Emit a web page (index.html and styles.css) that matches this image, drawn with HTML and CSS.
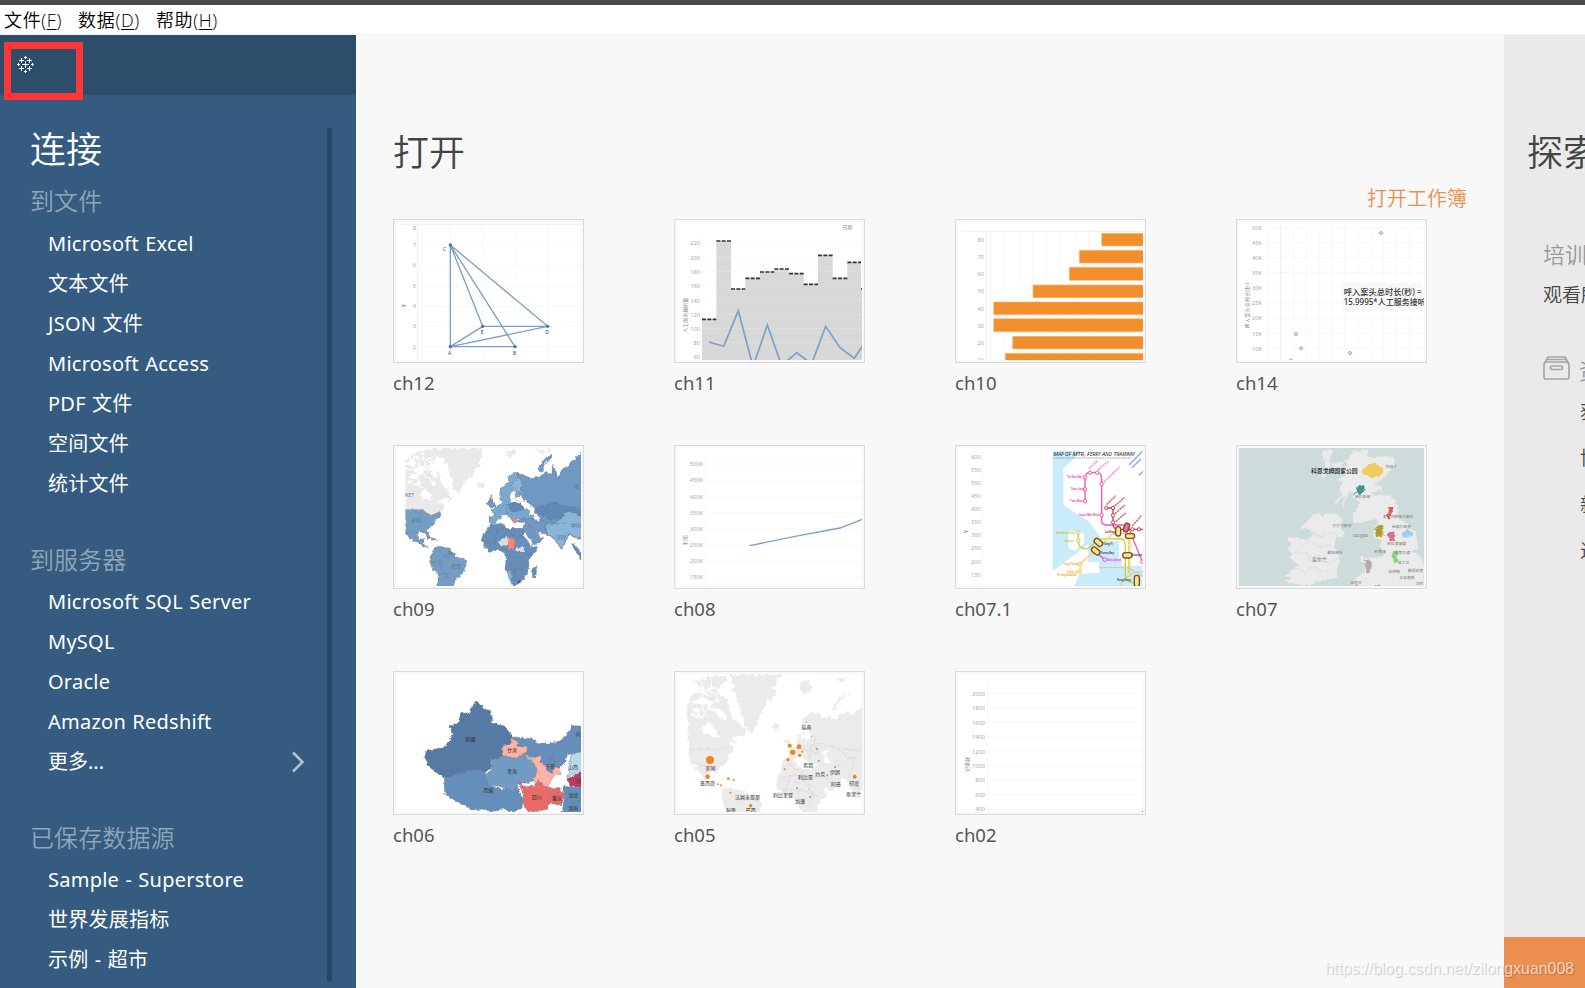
FILE: index.html
```html
<!DOCTYPE html>
<html lang="zh-CN">
<head>
<meta charset="utf-8">
<title>Tableau</title>
<link rel="stylesheet" href="styles.css">
</head>
<body>
<nav class="menubar"><span>文件(<u>F</u>)</span><span>数据(<u>D</u>)</span><span>帮助(<u>H</u>)</span></nav>
<div class="app">
<aside class="sidebar">
  <div class="brand">
    <svg class="logo" viewBox="0 0 18 18"><path d="M8.500 5v7M5 8.500h7M4.500 2v5M2 4.500h5M12.500 2v5M10 4.500h5M4.500 10v5M2 12.500h5M12.500 10v5M10 12.500h5M8.500 0v3M7 1.500h3M8.500 14v3M7 15.500h3M1.500 7v3M0 8.500h3M15.500 7v3M14 8.500h3"/></svg>
    <div class="marker"></div>
  </div>
  <div class="connect">
    <h1>连接</h1>
    <h2>到文件</h2>
    <ul><li>Microsoft Excel</li><li>文本文件</li><li>JSON 文件</li><li>Microsoft Access</li><li>PDF 文件</li><li>空间文件</li><li>统计文件</li></ul>
    <h2 class="later">到服务器</h2>
    <ul><li>Microsoft SQL Server</li><li>MySQL</li><li>Oracle</li><li>Amazon Redshift</li><li class="more">更多...<svg viewBox="0 0 14 22"><path d="M2 1.500 11.500 11 2 20.500"/></svg></li></ul>
    <h2 class="later">已保存数据源</h2>
    <ul><li>Sample - Superstore</li><li>世界发展指标</li><li>示例 - 超市</li></ul>
    <div class="scroll"></div>
  </div>
</aside>
<main class="open">
  <h1>打开</h1>
  <a class="open-link">打开工作簿</a>
  <div class="grid">
    <figure><div class="thumb"><svg viewBox="33 36 555 414">
      <path class="rule" d="M40 43H588M98 43V450"/><path class="rule faint" d="M98 105H588M98 166H588M98 228H588M98 289H588M98 349H588M98 410H588M196 43V450M293 43V450M390 43V450M488 43V450"/>
      <g class="tick"><text x="93" y="61">8</text><text x="93" y="111">7</text><text x="93" y="172">6</text><text x="93" y="234">5</text><text x="93" y="295">4</text><text x="93" y="355">3</text><text x="93" y="416">2</text></g>
      <text class="tiny dark" transform="translate(63 292) rotate(-90)">Y</text>
      <path class="blue" d="M196 105V410H390L196 105 488 349H293L196 105M196 410 293 349M196 410 488 349"/>
      <g fill="#4674a9"><circle cx="196" cy="105" r="5"/><circle cx="196" cy="410" r="5"/><circle cx="390" cy="410" r="5"/><circle cx="293" cy="349" r="5"/><circle cx="488" cy="349" r="5"/></g>
      <g class="tiny dark"><text x="173" y="122">C</text><text x="189" y="434">A</text><text x="384" y="434">B</text><text x="287" y="372">E</text><text x="481" y="372">D</text></g>
    </svg></div><figcaption>ch12</figcaption></figure>

    <figure><div class="thumb"><svg viewBox="36 36 555 414">
      <path fill="#d8d8d8" d="M111 450V328H154V93H198V237H241V205H285V186H328V177H372V191H416V223H459V136H503V205H547V157H588V237H591V450Z"/>
      <path class="rule" d="M110 62V450M110 98H591M110 142H591M110 185H591M110 228H591M110 271H591M110 313H591M110 355H591M110 398H591" opacity=".35"/>
      <path fill="none" stroke="#333" stroke-width="5" stroke-dasharray="12 4" d="M111 328H154M154 93H198M198 237H241M241 205H285M285 186H328M328 177H372M372 191H416M416 223H459M459 136H503M503 205H547M547 157H588M588 237H594"/>
      <path class="blue thick" d="M132 396 176 409 220 302 264 470 307 345 350 467 395 428 440 462 482 349 525 413 568 445 593 406"/>
      <g class="tick"><text x="105" y="105">220</text><text x="105" y="149">200</text><text x="105" y="192">180</text><text x="105" y="235">160</text><text x="105" y="278">140</text><text x="105" y="320">120</text><text x="105" y="362">100</text><text x="105" y="405">80</text><text x="105" y="447">60</text></g>
      <text class="tiny" x="532" y="58">日期</text><text class="tiny" transform="translate(67 368) rotate(-90)">人工服务接听量</text>
    </svg></div><figcaption>ch11</figcaption></figure>

    <figure><div class="thumb"><svg viewBox="39 36 555 414">
      <path class="rule" d="M48 64H594M124 64V450"/><path class="rule faint" d="M136 64V450M179 64V450M221 64V450M263 64V450M305 64V450M347 64V450M389 64V450M431 64V450"/>
      <path fill="#f28e2b" stroke="#f9b877" stroke-width="2" d="M470 70H596V108H470ZM403 121H596V159H403ZM373 172H596V211H373ZM264 225H596V263H264ZM146 276H596V314H146ZM146 326H596V365H146ZM203 379H596V417H203ZM181 430H596V460H181Z"/>
      <g class="tick"><text x="117" y="96">80</text><text x="117" y="148">70</text><text x="117" y="199">60</text><text x="117" y="250">50</text><text x="117" y="303">40</text><text x="117" y="353">30</text><text x="117" y="405">20</text><text x="117" y="456">10</text></g>
    </svg></div><figcaption>ch10</figcaption></figure>

    <figure><div class="thumb"><svg viewBox="42 141 555 414">
      <path class="rule faint" d="M116 157H597M116 203H597M116 248H597M116 293H597M116 339H597M116 384H597M116 429H597M116 475H597M116 521H597M127 150V555M206 150V555M244 150V555M284 150V555M322 150V555M360 150V555M399 150V555M438 150V555M476 150V555M515 150V555M553 150V555"/><path class="rule" d="M167 150V555"/>
      <g class="tick"><text x="111" y="166">50K</text><text x="111" y="209">45K</text><text x="111" y="254">40K</text><text x="111" y="300">35K</text><text x="111" y="345">30K</text><text x="111" y="391">25K</text><text x="111" y="436">20K</text><text x="111" y="482">15K</text><text x="111" y="527">10K</text></g>
      <g fill="#dfe9f3" stroke="#8fafd0" stroke-width="3"><circle cx="468" cy="174" r="4.500"/><circle cx="213" cy="477" r="4.500"/><circle cx="228" cy="520" r="4.500"/><circle cx="375" cy="534" r="4.500"/><circle cx="197" cy="556" r="4.500"/></g>
      <path fill="#f8f8f8" d="M349 322H592V408H349Z"/>
      <text class="note" x="356" y="359" textLength="234" lengthAdjust="spacingAndGlyphs">呼入案头总时长(秒) =</text><text class="note" x="356" y="391" textLength="246" lengthAdjust="spacingAndGlyphs">15.9995*人工服务接听</text>
      <text class="tiny" transform="translate(73 460) rotate(-90)" textLength="136">呼入案头总时长(秒)</text>
    </svg></div><figcaption>ch14</figcaption></figure>

    <figure><div class="thumb"><svg viewBox="33 39 555 414">
      <defs><filter id="coast" x="-5%" y="-5%" width="110%" height="110%" color-interpolation-filters="sRGB"><feTurbulence type="fractalNoise" baseFrequency=".07" numOctaves="3" seed="4"/><feDisplacementMap in="SourceGraphic" scale="22" xChannelSelector="R" yChannelSelector="G"/></filter><filter id="border" x="-5%" y="-5%" width="110%" height="110%" color-interpolation-filters="sRGB"><feTurbulence type="fractalNoise" baseFrequency=".09" numOctaves="2" seed="9"/><feDisplacementMap in="SourceGraphic" scale="13" xChannelSelector="R" yChannelSelector="G"/></filter></defs>
      <g filter="url(#coast)">
        <path fill="#e9e9e9" d="M61 75 78 60 98 50 145 40 170 45 150 70 140 95 165 115 168 145 185 160 200 190 175 215 165 238 135 238 120 232 61 224ZM172 40H290L285 85 270 105 258 125 235 150 222 178 208 160 198 130 190 90 175 70 150 60ZM273 147 290 142 300 150 287 160ZM361 52 372 45 386 42 392 55 376 68ZM448 40 475 48 500 44 490 55 465 56Z"/>
        <path fill="#fff" d="M61 83 80 70 95 100 75 92ZM82 105 110 87 130 105 105 115ZM104 174 120 162 140 175 138 200 116 191ZM130 70 150 100 160 130 143 120ZM65 125 90 116 100 125 78 133ZM155 200 188 190 190 225 170 205Z"/>
        <path class="strait" d="M61 62 86 74 120 68 148 82M88 50 102 84 96 128 112 160M112 50 118 82 142 110M64 104 96 108 128 128 148 150M68 142 86 150 104 146"/>
      </g>
      <g filter="url(#border)">
        <g class="nation"><path fill="#759dc3" d="M61 224H112L136 242 150 237 165 230 168 242 148 256 148 268 132 279 128 291 135 306 126 306 121 292 100 290 97 304 104 316 117 310 112 326 98 324 75 311 61 292Z"/>
        <path fill="#759dc3" d="M98 323 115 327 128 339 118 336ZM126 306 150 311 160 319 140 314ZM150 337 170 334 196 344 209 355 213 367 235 371 247 379 240 397 230 420 214 431 202 460H157L160 417 141 399 134 381 139 360Z"/>
        <path d="M316 267 336 267 352 265 363 281 390 280 414 280 424 308 439 336 459 335 452 350 430 374 433 399 421 420 411 440 389 452 378 444 375 423 360 400 364 366 356 350 336 345 315 350 295 331 291 311Z"/>
        <path d="M441 402 456 392 453 421 443 428Z"/>
        <path fill="#7ba8cf" d="M311 246 329 245 320 224 335 217 350 202 344 184 346 163 368 145 373 124 391 112 412 116 432 132 428 149 412 151 410 180 392 188 389 164 378 169 373 191 377 205 360 214 380 218 410 218 435 228 430 242 445 240 448 256 425 256 395 252 387 265 374 246 354 238 340 254 333 265 316 265Z"/>
        <path fill="#7098c2" d="M306 207 319 182 326 204 336 216 317 215ZM460 105 473 78 499 58 500 68 477 88 470 112ZM395 115 413 120 430 131 461 127 486 112 501 118 502 90 513 110 519 130 530 105 564 78 598 45V314L570 310 555 299 545 315 529 345 515 322 504 309 483 297 462 293 450 285 463 303 476 309 466 320 440 331 423 303 414 286 421 263 390 260 412 250 444 247 465 264 463 245 450 235 449 218 437 209 410 187 413 173Z"/>
        <path fill="#6189b5" d="M449 218 475 214 494 201 517 202 527 211 550 216 598 222V242L548 227 529 248 495 254 481 244 462 237ZM365 207 387 201 410 207 415 225 382 231ZM190 345 208 356 191 357Z"/>
        <path fill="#8ab4d8" d="M548 227 598 246V314L566 304 553 296 530 344 502 306 482 292 486 268 513 264 530 249ZM378 153 402 124 412 151 406 176 387 166ZM366 407 380 404 381 425 371 428Z"/>
        <path d="M558 326 570 329 588 352V376Z"/>
        <path fill="none" d="M316 267 336 285 355 278 357 264M355 278 387 304M387 280V304M414 280 421 303 389 305M336 285 328 325M291 317 328 325 344 332 356 343 368 342M387 304V340M365 365 408 367 440 355M408 367 411 388 433 388M381 404H411V422M364 382 390 391 389 425M156 340 176 360 209 359M138 381 164 378 169 405 194 419M164 378 182 365 195 372M157 417 180 415 202 441M61 292 76 294 98 292M336 217 350 230M366 208 366 235 387 239M382 190 410 202M413 250 434 272 447 283M444 247 478 260 483 294M477 238 510 266 545 264"/></g>
        <path fill="#fff" d="M384 262 412 266 416 278 392 277ZM414 292 420 290 440 322 438 330 424 312Z"/>
        <path fill="#d9dde1" d="M340 319 366 303 370 330 343 331ZM394 337 416 337 417 351 394 350Z"/><path fill="#ff8271" d="M368 306 390 312 387 339 370 344ZM382 249 396 253 391 267Z"/><path fill="#b02a58" d="M398 436h7v7h-7Z"/>
      </g><path fill="#fff" d="M33 39H61V453H33Z"/><g class="maptext soft"><text x="60" y="187">KET</text><text x="78" y="261">美国</text><text x="199" y="398">巴西</text><text x="567" y="158">俄</text><text x="558" y="277">中国</text><text x="515" y="311">印度</text></g>
    </svg></div><figcaption>ch09</figcaption></figure>

    <figure><div class="thumb"><svg viewBox="36 39 555 414">
      <path class="rule faint" d="M122 62V453M122 87H591M122 136H591M122 184H591M122 233H591M122 282H591M122 330H591M122 378H591M122 427H591"/>
      <g class="tick"><text x="114" y="94">500K</text><text x="114" y="142">450K</text><text x="114" y="191">400K</text><text x="114" y="240">350K</text><text x="114" y="288">300K</text><text x="114" y="337">250K</text><text x="114" y="385">200K</text><text x="114" y="433">150K</text></g>
      <path class="blue" d="M254 332 390 304 525 279 593 253"/><text class="tiny" transform="translate(67 331) rotate(-90)">利润</text>
    </svg></div><figcaption>ch08</figcaption></figure>

    <figure><div class="thumb"><svg viewBox="879 39 555 414">
      <path class="rule faint" d="M952 45V453"/><path fill="#c9ebfc" d="M1163 47H1249L1195 102V210L1272 260 1315 318 1362 319V370L1432 394V453H1228L1243 417 1303 413V381H1270V328L1163 408Z"/>
      <path fill="#fff" d="M1210 287 1255 293 1258 325 1228 347 1210 338ZM1370 310H1434V392H1370Z"/>
      <g class="tick"><text x="947" y="72">600</text><text x="947" y="111">550</text><text x="947" y="150">500</text><text x="947" y="189">450</text><text x="947" y="228">400</text><text x="947" y="268">350</text><text x="947" y="307">300</text><text x="947" y="346">250</text><text x="947" y="386">200</text><text x="947" y="425">150</text><text x="947" y="464">100</text></g><text class="tiny dark" transform="translate(908 294) rotate(-90)">Y</text>
      <g class="rail"><path stroke="#ff4faa" d="M1260 198V127Q1262 113 1275 113H1298Q1310 115 1310 132V258Q1310 270 1324 270H1375Q1393 272 1400 302L1432 380"/><path stroke="#dc3d4a" d="M1324 219H1344V270Q1346 283 1360 283H1434"/><path stroke="#c6d330" d="M1240 293V318Q1240 342 1264 342 1282 335 1293 315 1300 311 1370 311 1381 315 1381 335V420Q1384 444 1415 445M1392 311V414"/><path stroke="#ffd064" d="M1245 410V387L1290 347 1341 298Q1358 294 1382 296 1394 300 1394 320V426"/><path stroke="#e7ba91" stroke-dasharray="5 2" d="M1303 398H1390L1434 424M1364 453Q1396 405 1434 411"/><path stroke="#f03bee" d="M1292 350 1319 374"/></g>
      <g class="stops"><g stroke="#ff4faa"><circle cx="1260" cy="127" r="5"/><circle cx="1260" cy="163" r="5"/><circle cx="1260" cy="198" r="5"/><circle cx="1275" cy="113" r="5"/><circle cx="1296" cy="113" r="5"/><circle cx="1310" cy="147" r="5"/><circle cx="1310" cy="240" r="5"/><circle cx="1432" cy="380" r="5"/></g><g stroke="#c93b4b"><circle cx="1324" cy="219" r="5"/><circle cx="1344" cy="219" r="5"/><circle cx="1344" cy="241" r="5"/><circle cx="1344" cy="262" r="5"/><circle cx="1402" cy="283" r="5"/><circle cx="1422" cy="283" r="5"/></g><g stroke="#cad52c"><circle cx="1240" cy="293" r="5"/><circle cx="1240" cy="318" r="5"/></g><g stroke="#ffc34a"><circle cx="1245" cy="387" r="5"/><circle cx="1245" cy="410" r="5"/><circle cx="1394" cy="331" r="5"/></g><circle stroke="#f03bee" cx="1319" cy="374" r="5"/></g>
      <g fill="#ffe28a" stroke="#75501f" stroke-width="4"><rect x="1286" y="314" width="28" height="16" rx="8" transform="rotate(40 1300 322)"/><rect x="1278" y="340" width="28" height="16" rx="8" transform="rotate(40 1292 348)"/><rect x="1352" y="275" width="15" height="28" rx="7"/><rect x="1377" y="264" width="15" height="27" rx="7" fill="#f26a9d" transform="rotate(20 1384 277)"/><rect x="1381" y="296" width="28" height="14" rx="7"/><rect x="1373" y="353" width="28" height="16" rx="8"/><rect x="1408" y="421" width="15" height="34" rx="7"/></g>
      <path fill="none" stroke="#ff9ac7" stroke-width="5" stroke-dasharray="7 2" d="M1272 101 1299 76M1299 105 1330 79M1316 142 1364 96"/><path fill="none" stroke="#cf7679" stroke-width="5" stroke-dasharray="7 2" d="M1325 209 1352 182M1349 213 1379 187M1350 236 1380 210M1352 260 1382 234M1402 273 1429 242"/><path fill="none" stroke="#93b3f4" stroke-width="5" d="M1392 90 1432 49M1401 98 1428 72M1421 121 1435 109"/>
      <text class="metro" x="1165" y="63" textLength="245" lengthAdjust="spacingAndGlyphs">M<tspan class="sc">AP OF</tspan> MTR, F<tspan class="sc">ERRY</tspan> A<tspan class="sc">ND</tspan> T<tspan class="sc">RAMWAY</tspan></text><path stroke="#777" stroke-width="2" stroke-dasharray="5 2" d="M1165 69H1398"/>
      <g class="station"><text x="1206" y="130">Tin Shui Wai</text><text x="1218" y="165">Yuen Long</text><text x="1216" y="201">Tuen Mun</text><text x="1242" y="243">Tsuen Wan West</text><g fill="#c3cd2e"><text x="1174" y="296">AsiaWorld-Expo</text><text x="1200" y="320">Airport</text></g><g fill="#efae24"><text x="1195" y="389">Tung Chung</text><text x="1206" y="413">Cable Car</text><text x="1176" y="424">(Po Big Buddha)</text></g><g fill="#554234"><text x="1315" y="331">Tsing Yi</text><text x="1308" y="357">Sunny Bay</text><text x="1320" y="293">Lai King</text><text x="1400" y="363">Kowloon</text><text x="1356" y="438">Hong Kong</text></g><text x="1326" y="377" fill="#ed36e6">Disneyland</text></g>
    </svg></div><figcaption>ch07.1</figcaption></figure>

    <figure><div class="thumb"><svg viewBox="42 39 555 414"><path fill="#cddbda" d="M42 39H597V453H42Z"/>
      <g filter="url(#border)"><path class="land" d="M384 48 433 44 424 60 440 68 482 62 510 67 507 87 483 122 464 139 448 151 476 153 471 166 448 171 438 180 470 180 490 181 510 195 520 220 518 251 548 266 572 294 580 342 570 345 555 348 582 361 597 387V460H391L382 441 404 420 418 412 424 387 400 374 408 359 425 369 470 365 474 353 464 335 469 316 445 305 446 277 461 265 453 251 432 259 400 265 386 259 382 246 390 225 406 202 386 187 384 169 371 174 359 201 355 226 351 200 361 179 330 209 332 195 349 178 342 165 353 141 337 133 362 119 350 102 369 88 358 78 378 60Z"/>
      <path class="land" d="M239 265 260 244 276 233 292 243 307 233 333 236 348 249 355 273 348 283 362 293 351 306 333 310 327 335 337 348 345 376 338 407 334 428 313 433 282 438 256 450 236 453 209 447 178 439 199 430 181 421 203 402 222 388 210 381 189 368 204 357 187 342 198 329 188 316 193 303 220 311 244 314 260 300 262 289 247 283 221 282Z"/><path class="land" d="M393 310 407 295 403 310ZM290 50 314 42 325 49 310 76 294 74ZM300 79 317 72 313 105 299 103ZM320 88 352 77 355 95 330 101ZM354 110 374 108 371 118ZM290 114 308 124 294 132Z"/>
      <path fill="none" stroke="#d6d6d6" stroke-width="2" d="M262 289 290 310 305 290 330 310M244 318 270 288 283 305 309 310 324 291 343 304M225 329 260 318 280 336 320 329M208 351 246 354 258 383 285 360 310 388 337 370M217 395 242 415 263 391 286 409 308 404 320 425"/>
      <path fill="#efcc63" d="M409 111 414 99 427 97 430 87 446 83 470 97 472 114 457 127 435 128Z"/><path fill="#419590" d="M384 181 396 164 399 150 417 151 419 164 405 181 396 174Z"/><path fill="#e15759" d="M495 213 505 216 505 229 496 236 492 253 484 252 490 235Z"/><path fill="#b39b30" d="M448 280 463 269 475 279 476 302 454 306Z"/><path fill="#d37295" d="M484 295 509 289 507 306 510 319 495 316Z"/><path fill="#9fcbed" d="M531 304 537 286 552 285 565 297 556 305Z"/><path fill="#8cd17d" d="M504 347 516 352 520 378 510 383 501 370Z"/><path fill="#b9aaa6" d="M419 374 430 370 441 388 435 413 424 412Z"/><path fill="#f39a9d" d="M385 451 396 446 400 460H385Z"/><path fill="#f28e2b" d="M434 453 464 449V460H434Z"/></g>
      <g class="maptext small"><text class="strong" x="258" y="115" textLength="140">科恩戈姆国家公园</text><text x="482" y="98">阿伯丁</text><text x="390" y="189">格拉斯哥</text><text x="474" y="250">泰恩河畔纽卡斯尔</text><text x="322" y="276">贝尔法斯特</text><text x="385" y="307">Douglas</text><text x="500" y="279">米德尔斯堡</text><text x="486" y="329">布拉德福德</text><text x="307" y="358">都柏林市</text><text class="country" x="261" y="379">爱尔兰</text><text x="448" y="355">利物浦</text><text x="509" y="356">谢菲尔德</text><text x="518" y="386">诺丁汉</text><text x="490" y="415">伯明翰</text><text x="548" y="411">彼得伯勒</text><text x="523" y="431">北安普敦</text><text x="376" y="446">加的夫</text><text x="572" y="449">剑桥</text></g>
    </svg></div><figcaption>ch07</figcaption></figure>

    <figure><div class="thumb"><svg viewBox="33 42 555 414"><g class="nation" filter="url(#border)">
      <path d="M384 231 440 237 463 250 503 249 532 238 557 210 560 197 598 199V271L550 285 535 311 523 325 500 318 490 339 460 306 431 289 397 281Z"/><path fill="#557aa3" d="M118 286 127 271 170 264 193 246 202 226 195 198 218 191 228 160 257 158 261 138 277 125 292 138 292 148 315 151 323 174 318 188 359 199 383 229 376 254 356 268 353 292 316 300 320 321 302 336 275 329 210 343 181 356 153 339 131 316Z"/>
      <path d="M178 356 210 343 275 329 303 334 308 371 350 389 397 379 414 421 411 445 385 456 350 444 325 456 291 447 260 450 222 429 179 401Z"/><path fill="#719bc3" d="M313 300 350 289 418 287 458 318 450 361 399 375 384 393 339 379 305 370 308 339 321 323Z"/><path fill="#ffb2a5" d="M353 258 378 250 385 232 398 246 396 258 427 262 426 275 410 285 441 296 472 286 467 303 491 328 501 341 500 320 525 323 524 344 506 347 488 380 451 377 445 357 458 336 448 305 417 287 380 294 353 287Z"/><path fill="#e96b69" d="M399 366 413 367 414 380 448 379 460 361 479 380 520 384 539 403 528 437 493 428 488 447 460 454 430 455 415 434 414 399Z"/><path d="M535 379 598 385V466H530L538 413ZM480 329 488 325 498 288 511 312 502 340Z"/><path fill="#b8d9eb" d="M558 286 598 270V327L548 350Z"/><path fill="#b83c65" d="M547 356 598 331V384L555 377Z"/><path fill="none" d="M492 427 500 405 520 403 522 388 530 386M534 420 560 428 598 418"/></g>
      <g class="maptext black"><text x="241" y="242">新疆</text><text x="366" y="276">甘肃</text><text x="366" y="339">青海</text><text x="295" y="396">西藏</text><text x="440" y="417">四川</text><text x="501" y="420">重庆</text><text x="480" y="325">宁夏</text><text x="549" y="327">山西</text><text x="550" y="411">湖北</text><text x="550" y="450">湖南</text><text x="572" y="228">内</text><text x="572" y="369">河</text></g>
    </svg></div><figcaption>ch06</figcaption></figure>

    <figure><div class="thumb"><svg viewBox="36 42 555 414"><g filter="url(#coast)">
      <path class="land" d="M67 138 85 104 112 85 90 65 155 45 187 54 164 79 158 99 184 114 188 145 203 175 240 205 235 234 195 250 206 271 189 283 186 306 168 320 157 337 148 328 129 336 120 350 132 369 145 373 157 389 142 378 125 357 104 343 92 320 75 302ZM190 45H347L323 80 331 100 295 140 270 200 258 221 245 205 231 161 217 117 202 86 209 58ZM320 196 336 187 346 196 331 205ZM404 73 416 64 432 61 443 80 417 104ZM515 60 540 50 535 65ZM355 311 358 293 376 294 370 273 401 250 397 232 415 211 406 193 420 173 442 157 475 174 516 176 536 157 560 165 601 135V374L571 409 551 364 534 352 516 380 496 393 475 376 484 405 459 430 454 466H414L405 427 372 405 350 402 335 379 341 341 356 324ZM171 395 192 382 229 392 260 410 291 424 284 465H192L175 431ZM356 249 369 230 383 258ZM503 143 523 111 550 101 535 112 515 130 511 151Z"/>
      <path fill="#fff" d="M86 122 110 110 148 125 136 140ZM77 89 103 86 143 110 115 103ZM102 205 132 188 151 204 167 237 138 230ZM70 145 109 148 102 164ZM158 146 182 159 180 184 158 169ZM200 232 242 226 224 255ZM412 206 427 191 436 204 432 239 407 239ZM386 304 400 285 434 306 459 313 434 329 395 318ZM472 277 488 271 486 293 497 305 480 309Z"/>
      <path class="strait" d="M78 76 110 92 150 84 168 98M102 58 116 92 112 134 128 172M134 52 138 92 160 124M70 124 112 130 150 152 184 172M80 160 104 172 124 168"/>
      </g><path filter="url(#border)" fill="none" stroke="#d4d4d4" stroke-width="2" d="M75 269 150 269 205 258M89 311 155 325M370 313 430 353 469 342 506 369M340 352 394 345 438 380M350 388 412 390 460 410M399 391 405 448M402 263 455 278 450 230M431 299 440 249 468 292M459 247 520 266 587 270M496 253 541 284 568 300M510 320 568 291M568 291 554 350M360 400 372 350 402 370 430 353M420 375 445 400 430 440"/>
      <path fill="#fff" d="M36 42H65V456H36Z"/>
      <g fill="#f28518"><circle cx="135" cy="300" r="12"/><circle cx="128" cy="350" r="7"/><circle cx="383" cy="277" r="8"/><circle cx="374" cy="257" r="6"/><circle cx="402" cy="260" r="7"/><circle cx="369" cy="299" r="5"/><circle cx="569" cy="350" r="6"/><circle cx="257" cy="437" r="5"/><circle cx="404" cy="286" r="5"/><circle cx="190" cy="356" r="4"/><circle cx="206" cy="360" r="3"/><circle cx="158" cy="373" r="3"/><circle cx="168" cy="376" r="3"/><circle cx="196" cy="398" r="3"/><circle cx="456" cy="267" r="3"/><circle cx="461" cy="303" r="3"/><circle cx="510" cy="321" r="3"/><circle cx="396" cy="385" r="3"/><circle cx="435" cy="411" r="3"/><circle cx="424" cy="187" r="2"/><circle cx="359" cy="328" r="3"/><circle cx="412" cy="275" r="3"/><circle cx="487" cy="346" r="3"/><circle cx="439" cy="229" r="2"/></g>
      <g class="maptext black"><text x="121" y="330">美国</text><text x="105" y="374">墨西哥</text><text x="210" y="416">法属圭亚那</text><text x="183" y="457">秘鲁</text><text x="242" y="457">巴西</text><text x="409" y="208">瑞典</text><text x="415" y="321">希腊</text><text x="399" y="358">利比亚</text><text x="451" y="348">约旦</text><text x="495" y="341">伊朗</text><text x="498" y="379">阿曼</text><text x="553" y="376">印度</text><text x="324" y="411">利比里亚</text><text x="391" y="428">加蓬</text><text x="544" y="409">斯里兰</text></g>
    </svg></div><figcaption>ch05</figcaption></figure>

    <figure><div class="thumb"><svg viewBox="39 42 555 414"><path class="rule faint" d="M127 66V456M127 100H594M127 144H594M127 187H594M127 231H594M127 275H594M127 318H594M127 361H594M127 404H594M127 447H594"/>
      <g class="tick"><text x="120" y="107">2000</text><text x="120" y="150">1800</text><text x="120" y="194">1600</text><text x="120" y="238">1400</text><text x="120" y="281">1200</text><text x="120" y="324">1000</text><text x="120" y="367">800</text><text x="120" y="411">600</text><text x="120" y="453">400</text></g><text class="tiny" transform="translate(71 336) rotate(-90)">记录数</text><circle cx="592" cy="454" r="2" fill="#777"/>
    </svg></div><figcaption>ch02</figcaption></figure>
  </div>
</main>
<aside class="explore">
  <h1>探索</h1><h2>培训</h2><p>观看所有培训视频</p>
  <div class="resource"><svg viewBox="0 0 27 24"><path d="M1 8 5 1H22L26 8V21Q26 23 24 23H3Q1 23 1 21ZM1 8Q2 6 4 6H23Q25 6 26 8M4 3.500H23"/><rect x="7.500" y="10" width="12" height="3.500" rx="1.700"/></svg><h2>资源</h2></div>
  <ul><li>获取 Tableau</li><li>博客</li><li>新闻</li><li>近期活动</li></ul>
  <div class="promo"></div>
</aside>
</div>
<div class="watermark">https://blog.csdn.net/zilongxuan008</div>
</body>
</html>
```
FILE: styles.css
```css
*{box-sizing:border-box;margin:0;padding:0}
body{width:1585px;height:988px;overflow:hidden;display:flex;flex-direction:column;border-top:5px solid #4b4a48;background:#f8f8f8;font-family:"Noto Sans","Noto Sans CJK SC",sans-serif;position:relative}
h1,h2{font-weight:350}
ul{list-style:none}
.menubar{height:30px;flex:none;display:flex;gap:16px;padding-left:4px;background:#fff;border-bottom:1px solid #f1f1f1;font:350 18px/30px "Open Sans","Noto Sans CJK SC",sans-serif;letter-spacing:.65px;color:#000;white-space:nowrap}
.menubar u{text-underline-offset:2px;text-decoration-thickness:1px}
.app{flex:1;display:flex;min-height:0}
.sidebar{width:356px;flex:none;background:#355c80;color:#fff}
.brand{height:60px;background:#2d4e6b;position:relative}
.logo{position:absolute;left:17px;top:21px;width:18px;height:18px;fill:none;stroke:#fff;stroke-width:1}
.marker{position:absolute;left:4px;top:7px;width:79px;height:58px;border:7px solid #fc3738}
.connect{position:relative;padding:27px 0 0 30px}
.connect h1{font-size:36px;line-height:56px}
.connect h2{font-size:24px;line-height:40px;margin:3px 0;letter-spacing:.1px;color:#8fa5b8}
.connect h2.later{margin-top:36px;margin-bottom:2px}
.connect li{font-size:20px;line-height:40px;height:40px;padding-left:18px;white-space:nowrap;letter-spacing:.25px;word-spacing:.8px}
.connect li.more{display:flex;align-items:center;letter-spacing:0}
.more svg{width:14px;height:22px;margin-left:187px;fill:none;stroke:#b2c0cd;stroke-width:2.600}
.scroll{position:absolute;left:327px;top:33px;width:5px;height:854px;border-radius:3px;background:#284662}
.open{width:1148px;flex:none;padding:88px 37px 0;color:#444}
.open h1,.explore h1{font-size:36px;line-height:60px;color:#444}
.open-link{display:block;text-align:right;font-size:20px;line-height:32px;color:#eb8f50;font-weight:350;height:36px}
.grid{display:grid;grid-template-columns:repeat(4,191px);column-gap:90px;grid-auto-rows:226px}
.thumb{width:191px;height:144px;border:1px solid #dadada;padding:2px;background:#f8f8f8}
.thumb svg{display:block;width:185px;height:138px;background:#fff;overflow:hidden}
figcaption{font-size:18.500px;line-height:40px;color:#555}
.rule{fill:none;stroke:#eee;stroke-width:3}
.faint{stroke:#f7f7f7}
.tick{font:17px "Noto Sans",sans-serif;fill:#aaa;text-anchor:end}
.tiny{font:15px "Noto Sans","Noto Sans CJK SC",sans-serif;fill:#888}
.dark{fill:#444}
.blue{fill:none;stroke:#7c9fc7;stroke-width:4}
.thick{stroke-width:5}
.note{font:500 24px "Noto Sans","Noto Sans CJK SC",sans-serif;fill:#333}
.nation{fill:#658fba;stroke:#65727f;stroke-width:1.300}
.land{fill:#ebebeb;stroke:#dcdcdc;stroke-width:1}
.strait{fill:none;stroke:#fff;stroke-width:5}
.maptext{font:15px "Noto Sans CJK SC",sans-serif;fill:#777}
.black{fill:#333}
.soft{fill:#55779b}
.small{font-size:11.500px}
.country{font-size:15px}
.strong{font-size:17.500px;font-weight:500;fill:#222}
.rail{fill:none;stroke-width:4}
.stops{fill:#fff;stroke-width:3}
.metro{font:italic 17px "Noto Sans",sans-serif;fill:#222}
.sc{font-size:13.500px}
.station{font:bold 7.500px "Noto Sans",sans-serif;fill:#f43c9f}
.explore{width:81px;flex:none;background:#eaeaea;padding:88px 0 0 24px;overflow:hidden;white-space:nowrap;display:flex;flex-direction:column}
.explore h1{margin-left:-1px}
.explore h2{font-size:22px;line-height:40px;color:#999;margin:51px 0 0 15px}
.explore p{margin-left:15px;font-size:19px;line-height:42px;color:#444;font-weight:350}
.resource{display:flex;align-items:center;height:40px;margin:32px 0 0 15px;gap:9px}
.resource svg{width:27px;height:24px;flex:none;fill:none;stroke:#a6a6a6;stroke-width:1.700}
.explore .resource h2{margin:4px 0 0}
.explore ul{margin:1px 0 0 52px}
.explore li{height:46.300px;line-height:46.300px;font-size:19px;font-weight:350;color:#444}
.promo{height:51px;flex:none;margin:auto 0 0 -24px;background:#eb8f50}
.watermark{position:absolute;left:1325px;top:953px;font:15.900px/22px "Liberation Sans",sans-serif;color:rgba(255,255,255,.65);text-shadow:1px 1px 1px rgba(0,0,0,.2);white-space:nowrap}
```
